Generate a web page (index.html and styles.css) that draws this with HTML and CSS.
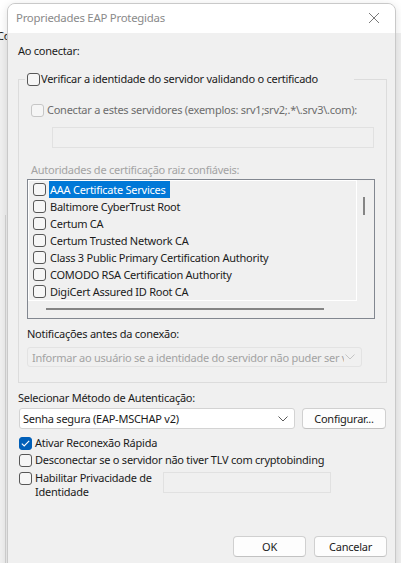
FILE: index.html
```html
<!DOCTYPE html>
<html lang="pt">
<head>
<meta charset="utf-8">
<title>Propriedades EAP Protegidas</title>
<link rel="stylesheet" href="styles.css">
</head>
<body>
<div class="desktop">
  <div class="behind-top"></div>
  <div class="behind-text">Co</div>
  <div class="behind-line"></div>

  <div class="dialog">
    <div class="titlebar">
      <span class="title">Propriedades EAP Protegidas</span>
      <svg class="close" width="12" height="12" viewBox="0 0 12 12"><path d="M1 1 L11 11 M11 1 L1 11" stroke="#7a7a7a" stroke-width="1" fill="none"/></svg>
    </div>
    <div class="content">
      <div class="label first">Ao conectar:</div>

      <div class="group">
        <div class="legend">
          <span class="cb"></span>
          <span class="txt">Verificar a identidade do servidor validando o certificado</span>
        </div>

        <div class="row conectar">
          <span class="cb dis"></span>
          <span class="txt dis-text">Conectar a estes servidores (exemplos: srv1;srv2;.*\.srv3\.com):</span>
        </div>
        <div class="input servers"></div>

        <div class="label autoridades">Autoridades de certificação raiz confiáveis:</div>

        <div class="list">
          <div class="client">
            <div class="item"><span class="cb"></span><span class="name sel">AAA Certificate Services</span></div>
            <div class="item"><span class="cb"></span><span class="name">Baltimore CyberTrust Root</span></div>
            <div class="item"><span class="cb"></span><span class="name">Certum CA</span></div>
            <div class="item"><span class="cb"></span><span class="name">Certum Trusted Network CA</span></div>
            <div class="item"><span class="cb"></span><span class="name">Class 3 Public Primary Certification Authority</span></div>
            <div class="item"><span class="cb"></span><span class="name">COMODO RSA Certification Authority</span></div>
            <div class="item"><span class="cb"></span><span class="name">DigiCert Assured ID Root CA</span></div>
          </div>
          <div class="vscroll"><div class="vthumb"></div></div>
          <div class="hscroll"><div class="hthumb"></div></div>
          <div class="corner"></div>
        </div>

        <div class="label notif">Notificações antes da conexão:</div>
        <div class="select disabled">
          <span class="sel-text">Informar ao usuário se a identidade do servidor não puder ser verificada</span>
          <svg class="chev" width="10" height="6" viewBox="0 0 10 6"><path d="M0.5 0.5 L5 5 L9.5 0.5" stroke="#c4c4c4" fill="none"/></svg>
        </div>
      </div>

      <div class="label metodo">Selecionar Método de Autenticação:</div>
      <div class="method-row">
        <div class="select active">
          <span class="sel-text">Senha segura (EAP-MSCHAP v2)</span>
          <svg class="chev" width="10" height="6" viewBox="0 0 10 6"><path d="M0.5 0.5 L5 5 L9.5 0.5" stroke="#5a5a5a" fill="none"/></svg>
        </div>
        <button class="btn config">Configurar...</button>
      </div>

      <div class="row opt reconexao">
        <span class="cb checked"><svg width="9" height="7" viewBox="0 0 9 7"><path d="M0.8 3.6 L3.2 6 L8.2 0.8" stroke="#ffffff" stroke-width="1.1" fill="none"/></svg></span>
        <span class="txt">Ativar Reconexão Rápida</span>
      </div>
      <div class="row opt desconectar">
        <span class="cb"></span>
        <span class="txt">Desconectar se o servidor não tiver TLV com cryptobinding</span>
      </div>
      <div class="row opt privacidade">
        <span class="cb"></span>
        <span class="txt wrap">Habilitar Privacidade de Identidade</span>
        <div class="input ident"></div>
      </div>

      <div class="buttons">
        <button class="btn ok">OK</button>
        <button class="btn cancel">Cancelar</button>
      </div>
    </div>
  </div>
</div>
</body>
</html>
```

FILE: styles.css
```css
* { box-sizing: border-box; }

html, body {
  margin: 0;
  padding: 0;
}

body {
  width: 401px;
  height: 563px;
  overflow: hidden;
  font-family: "Noto Sans", "Open Sans", sans-serif;
  font-size: 11px;
  letter-spacing: -0.25px;
  color: #1b1b1b;
  background: #f0f0f0;
}

.desktop {
  position: relative;
  width: 401px;
  height: 563px;
  overflow: hidden;
}

.behind-top {
  height: 33px;
  background: #ffffff;
}

.behind-text {
  position: absolute;
  left: -3px;
  top: 28px;
  line-height: 16px;
  color: #1b1b1b;
}

.behind-line {
  position: absolute;
  left: 5px;
  top: 215px;
  width: 1px;
  height: 348px;
  background: #d4d4d4;
}

.dialog {
  position: absolute;
  left: 7px;
  top: 3px;
  width: 389px;
  height: 575px;
  border: 1px solid #c9c9c9;
  border-radius: 8px 8px 0 0;
  background: #f0f0f0;
  box-shadow: 0 2px 10px rgba(0, 0, 0, 0.12);
  overflow: hidden;
}

.titlebar {
  height: 29px;
  background: #ffffff;
  display: flex;
  align-items: center;
  justify-content: space-between;
  padding: 0 15px 0 8px;
}

.title {
  color: #8a8a8a;
  font-size: 11.4px;
  line-height: 16px;
  margin-top: -1px;
}

.close {
  display: block;
  margin-top: -2px;
}

.content {
  display: flex;
  flex-direction: column;
  align-items: flex-start;
  padding: 0 7px 0 10px;
}

.label {
  line-height: 16px;
  white-space: nowrap;
}

.label.first { margin-top: 10px; }

/* Group box */
.group {
  position: relative;
  margin-top: 20px;
  width: 369px;
  border: 1px solid #dcdcdc;
  padding: 22px 0 15px 8px;
  display: flex;
  flex-direction: column;
  align-items: flex-start;
}

.legend {
  position: absolute;
  left: 6px;
  top: -9px;
  width: 329px;
  display: flex;
  align-items: center;
  gap: 1px;
  padding: 0 0 0 2px;
  background: #f0f0f0;
  line-height: 16px;
  white-space: nowrap;
}

.row {
  display: flex;
  align-items: center;
  gap: 3px;
  line-height: 16px;
  white-space: nowrap;
}

.cb {
  flex: none;
  display: inline-flex;
  align-items: center;
  justify-content: center;
  width: 13px;
  height: 13px;
  border: 1px solid #575757;
  border-radius: 3px;
  background: #f6f6f6;
}

.cb.dis {
  border-color: #c6c6c6;
  background: #f5f5f5;
}

.cb.checked {
  background: #005fb8;
  border-color: #005fb8;
}

.dis-text { color: #6d6d6d; }

.conectar { margin-left: 4px; }

.input {
  height: 21px;
  border: 1px solid #e1e1e1;
  background: #f0f0f0;
}

.input.servers {
  margin-left: 25px;
  margin-top: 9px;
  width: 322px;
}

.label.autoridades {
  margin-left: 4px;
  margin-top: 14px;
  color: #a3a3a3;
}

/* List */
.list {
  margin-top: 1px;
  width: 348px;
  height: 140px;
  border: 1px solid #828790;
  display: grid;
  grid-template-columns: 1fr 17px;
  grid-template-rows: 1fr 17px;
  background: #f0f0f0;
}

.client {
  border: 1px solid #ffffff;
  padding: 0 0 0 4px;
  overflow: hidden;
}

.item {
  display: flex;
  align-items: center;
  gap: 3px;
  height: 17px;
  line-height: 17px;
  white-space: nowrap;
}

.item .name {
  padding: 0 4px 0 1px;
  color: #1b1b1b;
}

.item .name.sel {
  background: #0078d7;
  color: #ffffff;
}

.vscroll {
  padding: 17px 0 0 6px;
}

.vthumb {
  width: 2px;
  height: 18px;
  background: #858585;
}

.hscroll {
  padding: 7px 0 0 18px;
}

.hthumb {
  width: 278px;
  height: 2px;
  background: #858585;
}

.label.notif { margin-top: 7px; }

.select {
  display: flex;
  align-items: center;
  justify-content: space-between;
  height: 20px;
  border-radius: 3px;
  white-space: nowrap;
  overflow: hidden;
}

.select.disabled {
  margin-top: 5px;
  width: 335px;
  border: 1px solid #e3e3e3;
  background: #f0f0f0;
  color: #a3a3a3;
  padding: 0 6px 0 4px;
}

.select.disabled .sel-text {
  overflow: hidden;
  width: 312px;
}

.label.metodo { margin-top: 7px; }

.method-row {
  display: flex;
  gap: 7px;
  margin-top: 2px;
  margin-left: 1px;
}

.select.active {
  width: 276px;
  height: 21px;
  border: 1px solid #d3d3d3;
  background: #ffffff;
  padding: 0 6px 0 3px;
  color: #1b1b1b;
}

.btn {
  font-family: inherit;
  font-size: 11px;
  letter-spacing: -0.25px;
  color: #1b1b1b;
  background: #fdfdfd;
  border: 1px solid #d0d0d0;
  border-bottom-color: #c2c2c2;
  border-radius: 4px;
  height: 21px;
  padding: 0;
  line-height: 18px;
}

.btn.config { width: 84px; }

.opt { margin-left: 1px; }
.reconexao { margin-top: 6px; }
.desconectar { margin-top: 1px; }

.privacidade {
  margin-top: 3px;
  align-items: flex-start;
}

.privacidade .cb { margin-top: 1px; }

.txt.wrap {
  white-space: normal;
  width: 122px;
  line-height: 14px;
}

.input.ident {
  margin-left: 3px;
  width: 168px;
  height: 21px;
  margin-top: 1px;
}

.buttons {
  align-self: stretch;
  display: flex;
  justify-content: flex-end;
  gap: 8px;
  margin-top: 37px;
  padding-right: 1px;
}

.btn.ok, .btn.cancel { width: 73px; }
```
